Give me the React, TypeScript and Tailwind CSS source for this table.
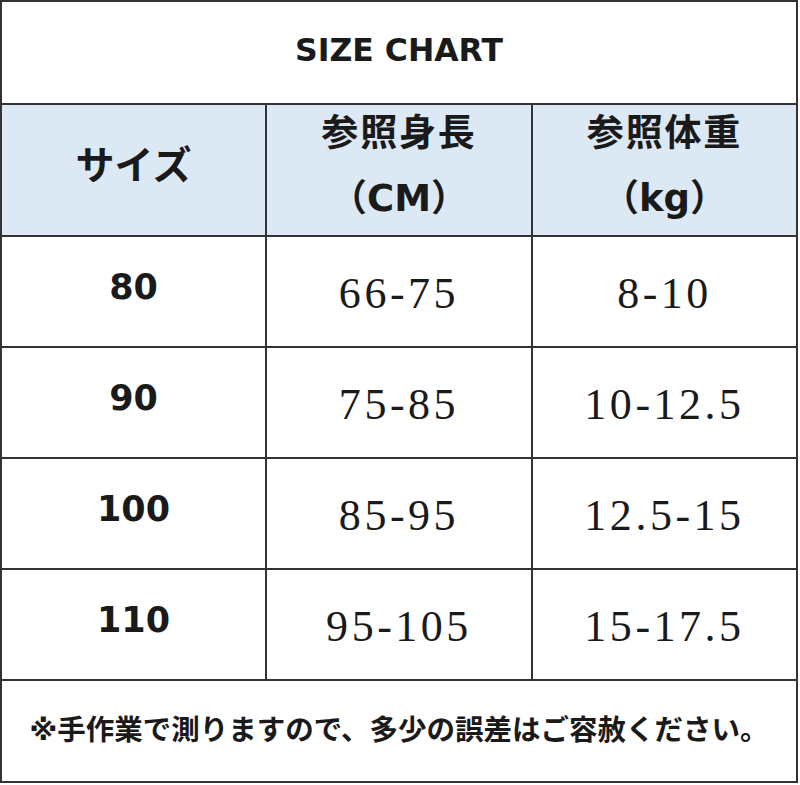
const sans = "font-['DejaVu_Sans','Noto_Sans_CJK_JP',sans-serif]";
const serif = "font-['Liberation_Serif','Noto_Sans_CJK_JP',serif]";

const rows = [
	{ size: '80', height: '66-75', weight: '8-10' },
	{ size: '90', height: '75-85', weight: '10-12.5' },
	{ size: '100', height: '85-95', weight: '12.5-15' },
	{ size: '110', height: '95-105', weight: '15-17.5' },
];

export default function App() {
	return (
		<div className="h-[785px] w-[800px] bg-white">
			<div className="flex h-[783px] w-[798px] flex-col border-2 border-[#333] text-[#1a1a1a]">
				{/* title */}
				<div
					className={`flex h-[103px] shrink-0 items-center justify-center border-b-2 border-[#333] pb-1 text-[31.5px] font-bold ${sans}`}
				>
					SIZE CHART
				</div>

				{/* header */}
				<div className="flex h-[132px] shrink-0 border-b-2 border-[#333] bg-[#dce8f4]">
					<div
						className={`flex w-[265px] items-center justify-center border-r-2 border-[#333] pb-2 text-[39px] font-bold ${sans}`}
					>
						サイズ
					</div>
					<div
						className={`flex w-[266px] flex-col items-center justify-center border-r-2 border-[#333] pb-2 text-[37px] leading-[65px] font-bold ${sans}`}
					>
						<span className="tracking-[0.05em]">参照身長</span>
						<span>（CM）</span>
					</div>
					<div
						className={`flex flex-1 flex-col items-center justify-center pb-2 text-[37px] leading-[65px] font-bold ${sans}`}
					>
						<span className="tracking-[0.05em]">参照体重</span>
						<span>（kg）</span>
					</div>
				</div>

				{/* data rows */}
				{rows.map((row) => (
					<div key={row.size} className="flex h-[111px] shrink-0 border-b-2 border-[#333]">
						<div
							className={`flex w-[265px] items-center justify-center border-r-2 border-[#333] pb-2 text-[35px] font-bold ${sans}`}
						>
							{row.size}
						</div>
						<div
							className={`flex w-[266px] items-center justify-center border-r-2 border-[#333] pt-1 text-[44px] tracking-[0.08em] ${serif}`}
						>
							{row.height}
						</div>
						<div
							className={`flex flex-1 items-center justify-center pt-1 text-[44px] tracking-[0.08em] ${serif}`}
						>
							{row.weight}
						</div>
					</div>
				))}

				{/* footer */}
				<div
					className={`flex flex-1 items-center justify-center text-[28.5px] font-bold ${sans}`}
				>
					※手作業で測りますので、多少の誤差はご容赦ください。
				</div>
			</div>
		</div>
	);
}
